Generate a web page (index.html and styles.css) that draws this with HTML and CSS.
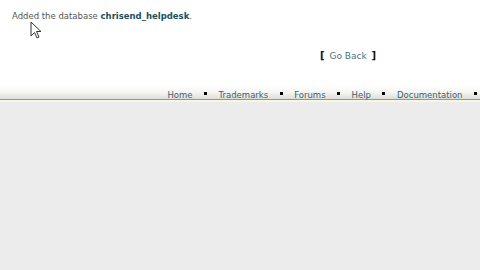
FILE: index.html
```html
<!DOCTYPE html>
<html>
<head>
<meta charset="utf-8">
<link rel="stylesheet" href="styles.css">
</head>
<body>
<div class="top">
  <p class="msg">Added the database <b>chrisend_helpdesk</b>.</p>
  <svg class="cursor" width="12" height="18" viewBox="0 0 12 18"><path d="M1 1 L1 15 L4.5 11.5 L7 17 L9 16 L6.5 10.5 L11 10.5 Z" fill="#fff" stroke="#333" stroke-width="1"/></svg>
  <div class="back"><span class="br">[</span> <a href="#">Go Back</a> <span class="br">]</span></div>
</div>
<div class="nav">
  <a href="#">Home</a><i></i>
  <a href="#">Trademarks</a><i></i>
  <a href="#">Forums</a><i></i>
  <a href="#">Help</a><i></i>
  <a href="#">Documentation</a><i></i>
</div>
<div class="rule"></div>
<div class="rest"></div>
</body>
</html>
```
FILE: styles.css
```css
html, body { margin: 0; padding: 0; }
body { background: #ececec; font-family: "DejaVu Sans", Verdana, sans-serif; font-size: 8.5px; color: #555; }
.top { position: relative; background: #fff; height: 85px; padding: 0 12px; }
.msg { margin: 0; padding-top: 11px; line-height: 11px; color: #555; }
.msg b { color: #1e4f5c; }
.cursor { position: absolute; left: 30px; top: 21px; }
.back { position: absolute; left: 320px; top: 50px; color: #000; font-size: 9px; }
.back a { color: #4a7480; text-decoration: none; padding: 0 2px; }
.br { font-size: 10px; font-weight: bold; color: #111; }
.nav { height: 14px; background: linear-gradient(#ffffff, #f6f6f4 50%, #deded9); display: flex; justify-content: flex-end; align-items: center; padding-right: 3px; gap: 11.5px; }
.nav a { color: #3e6470; text-decoration: none; line-height: 14px; padding-top: 5px; }
.nav i { width: 3px; height: 3px; background: #000; display: block; margin-top: 2px; }
.rule { height: 1px; background: #9c9c6a; }
.rule + .rest { border-top: 2px solid #f6f6e4; }
.rest { height: 160px; background: #ececec; }
```
